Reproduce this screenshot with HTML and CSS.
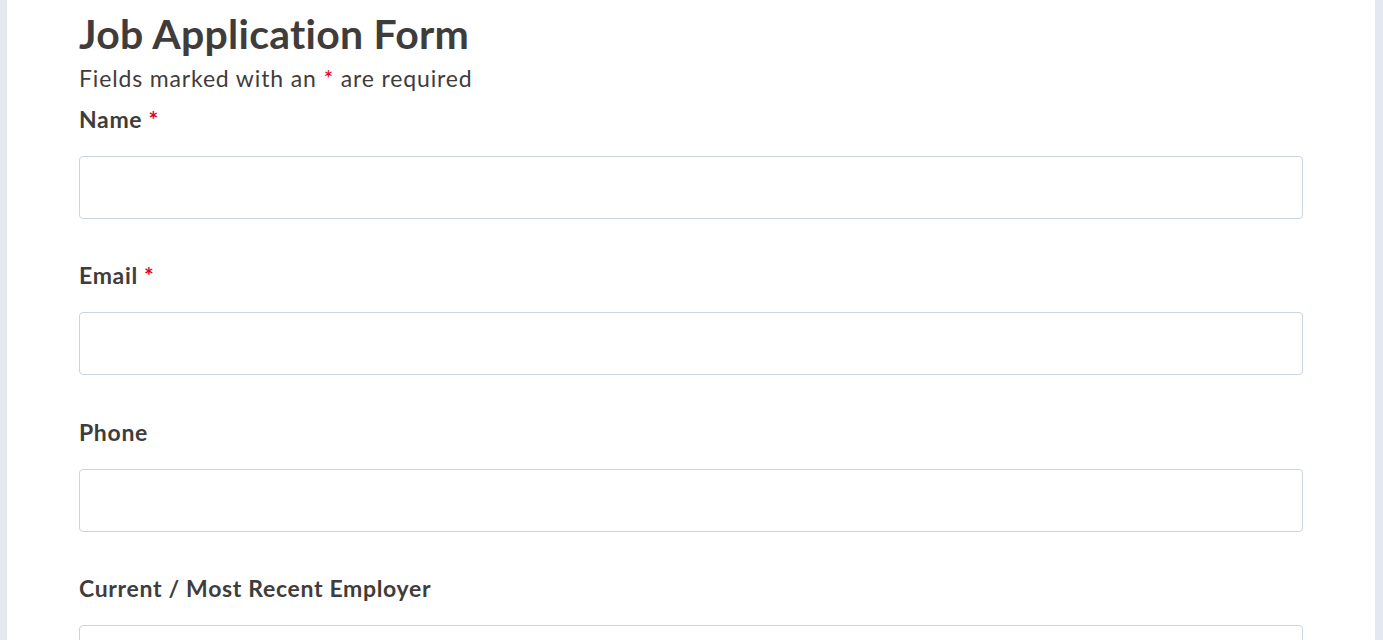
FILE: index.html
```html
<!DOCTYPE html>
<html>
<head>
<meta charset="utf-8">
<link rel="stylesheet" href="styles.css">
</head>
<body>
<main class="panel">
  <form class="form">
    <header class="form-head">
      <h1 class="title">Job Application Form</h1>
      <p class="note">Fields marked with an <span class="req">*</span> are required</p>
    </header>
    <div class="field">
      <label class="label" for="name">Name <span class="req">*</span></label>
      <input class="input" id="name" type="text">
    </div>
    <div class="field">
      <label class="label" for="email">Email <span class="req">*</span></label>
      <input class="input" id="email" type="email">
    </div>
    <div class="field">
      <label class="label" for="phone">Phone</label>
      <input class="input" id="phone" type="tel">
    </div>
    <div class="field">
      <label class="label" for="employer">Current / Most Recent Employer</label>
      <input class="input" id="employer" type="text">
    </div>
  </form>
</main>
</body>
</html>
```
FILE: styles.css
```css
html, body {
  margin: 0;
  padding: 0;
  height: 100%;
}
body {
  background: #e4e8f0;
  font-family: Lato, "Noto Sans", sans-serif;
  color: #3f3d3c;
  overflow: hidden;
}
.panel {
  margin: 0 8px 0 7px;
  background: #ffffff;
  min-height: 100%;
  padding: 0 72px;
  box-sizing: border-box;
}
.form {
  display: flex;
  flex-direction: column;
}
.form-head {
  padding-top: 10px;
  margin-bottom: 11px;
}
.title {
  margin: 0;
  font-size: 41px;
  line-height: 48px;
  font-weight: 700;
  letter-spacing: 0.25px;
}
.note {
  margin: 5px 0 0;
  font-size: 23px;
  line-height: 30px;
  letter-spacing: 0.85px;
}
.req {
  color: #e0001b;
}
.field {
  display: flex;
  flex-direction: column;
  margin-bottom: 41.4px;
}
.label {
  font-size: 23px;
  font-weight: 700;
  line-height: 30px;
  letter-spacing: 0.67px;
  margin-bottom: 22px;
}
.input {
  height: 63px;
  box-sizing: border-box;
  border: 1px solid #cbd5e0;
  border-radius: 4px;
  background: #fff;
  font: inherit;
  padding: 0 12px;
}
```
